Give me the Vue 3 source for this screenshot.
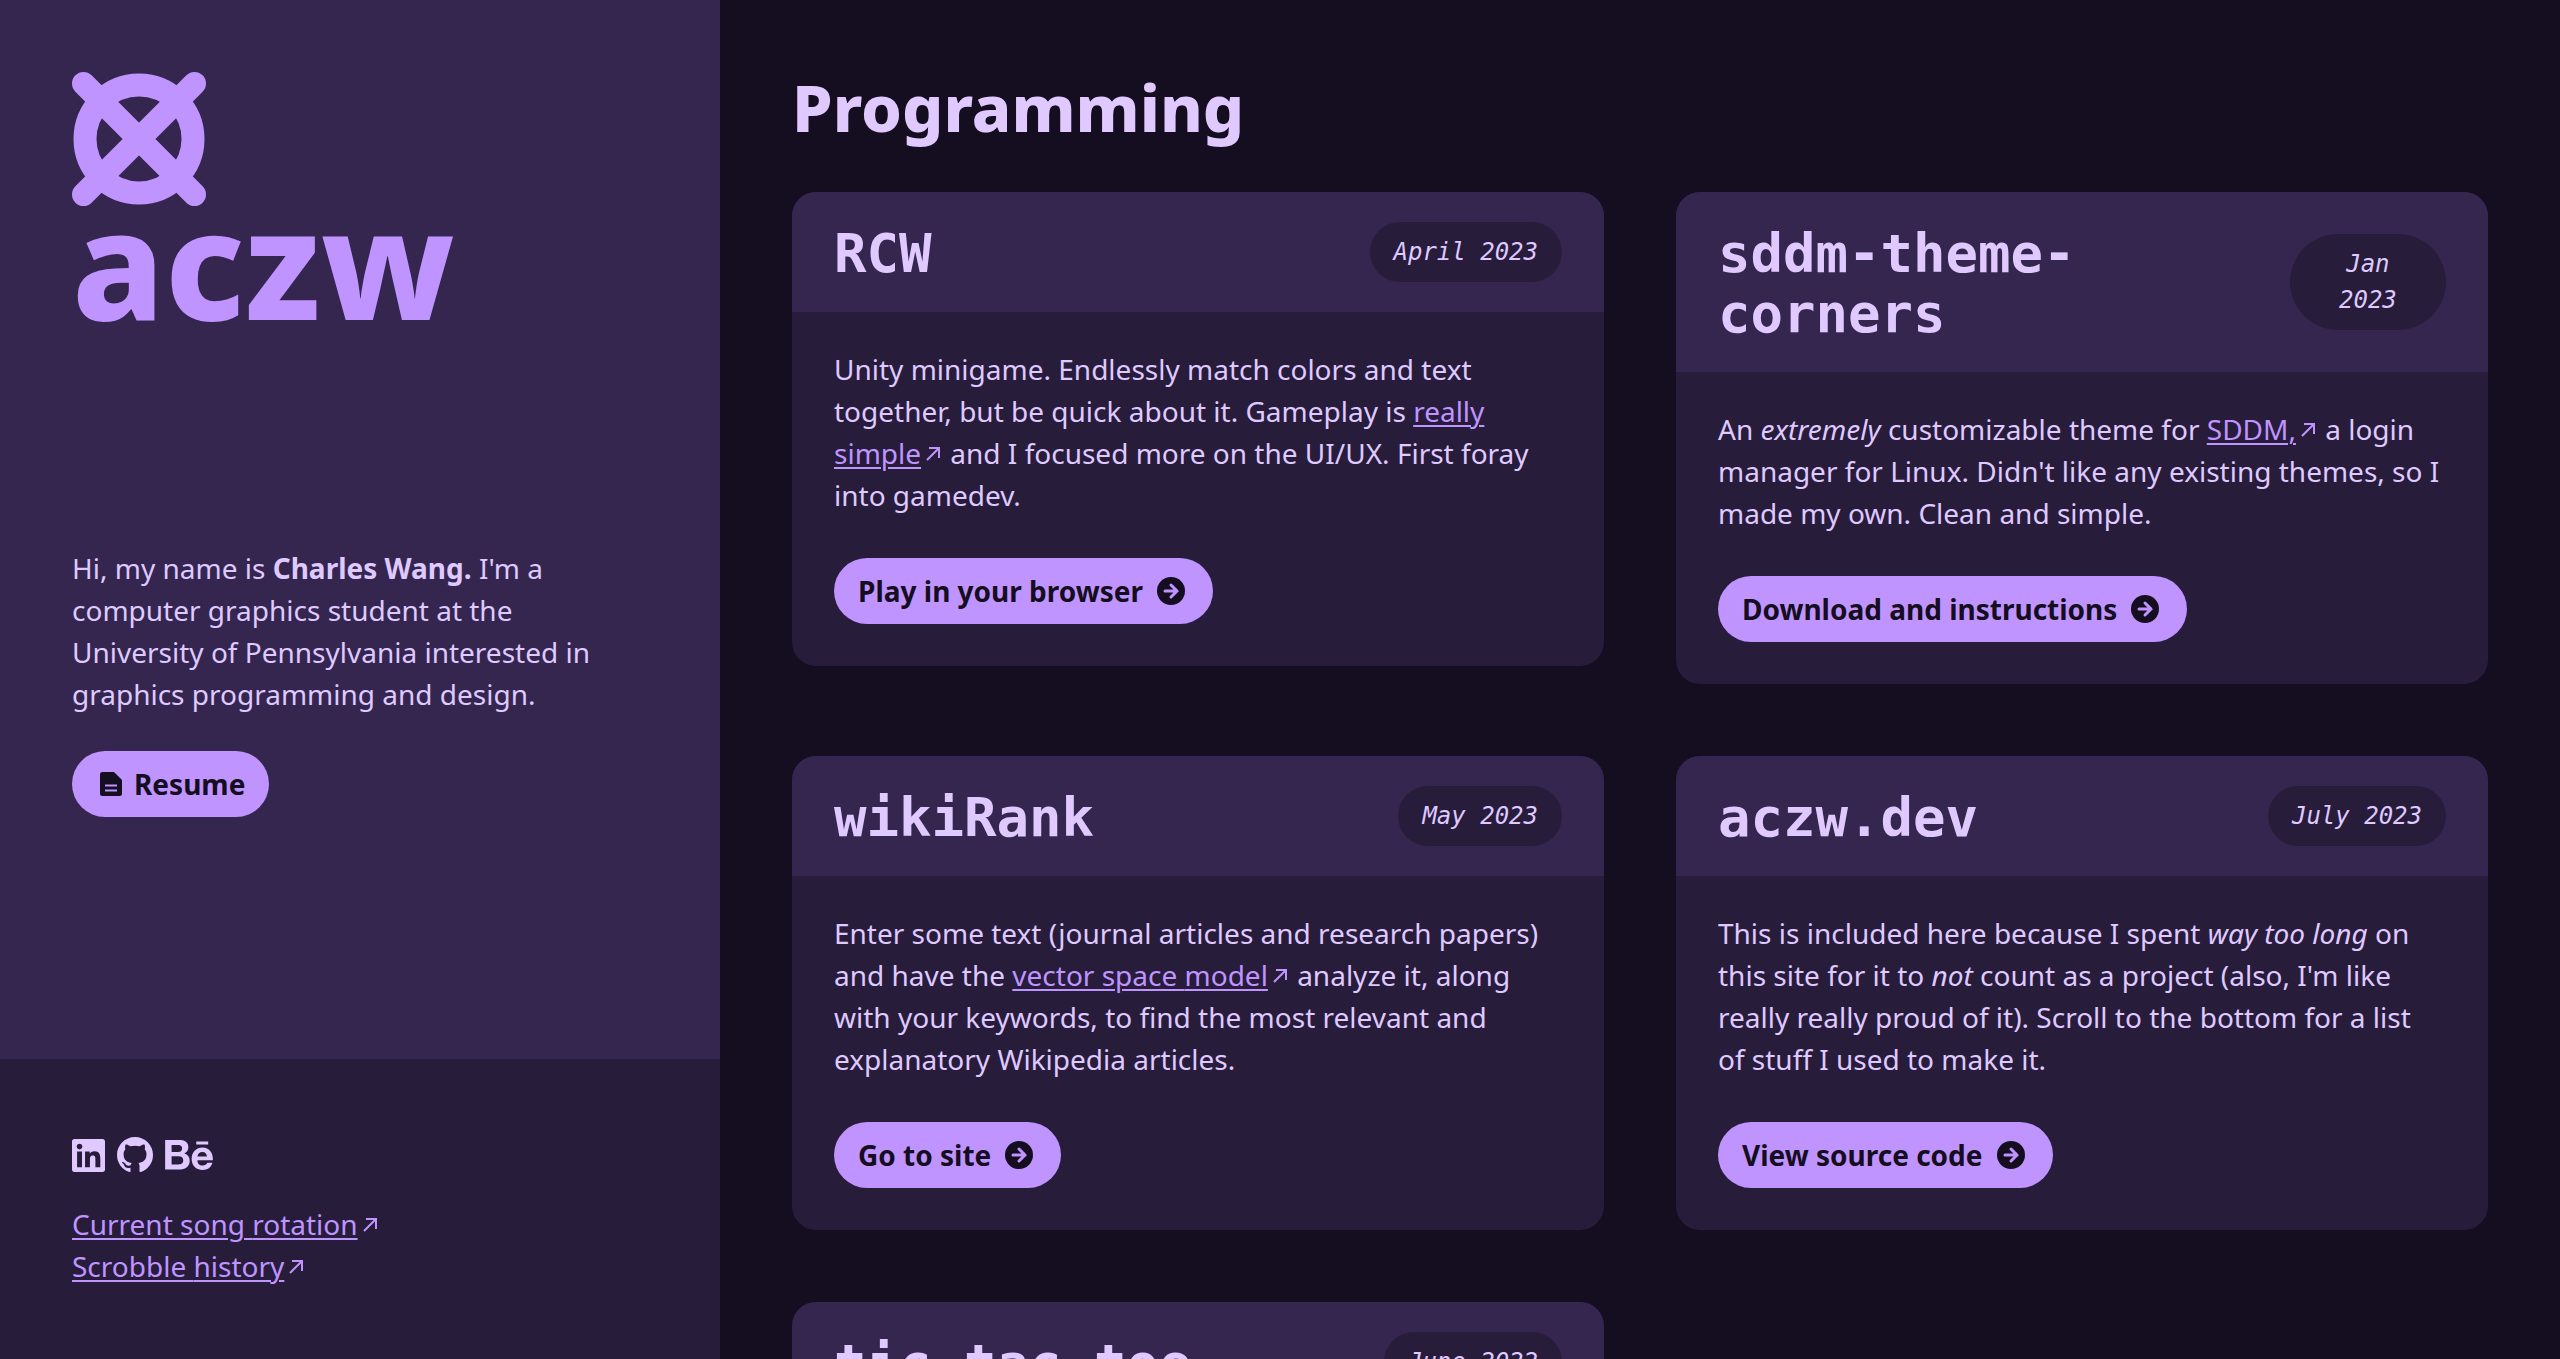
<script setup>
const projects = [
  {
    name: 'RCW',
    date: 'April 2023',
    body: [
      { t: 'Unity minigame. Endlessly match colors and text together, but be quick about it. Gameplay is ' },
      { link: 'really ', tail: 'simple' },
      { t: ' and I focused more on the UI/UX. First foray into gamedev.' },
    ],
    action: 'Play in your browser',
  },
  {
    name: 'sddm-theme-corners',
    date: 'Jan 2023',
    body: [
      { t: 'An ' },
      { em: 'extremely' },
      { t: ' customizable theme for ' },
      { link: '', tail: 'SDDM,' },
      { t: " a login manager for Linux. Didn't like any existing themes, so I made my own. Clean and simple." },
    ],
    action: 'Download and instructions',
  },
  {
    name: 'wikiRank',
    date: 'May 2023',
    body: [
      { t: 'Enter some text (journal articles and research papers) and have the ' },
      { link: 'vector space ', tail: 'model' },
      { t: ' analyze it, along with your keywords, to find the most relevant and explanatory Wikipedia articles.' },
    ],
    action: 'Go to site',
  },
  {
    name: 'aczw.dev',
    date: 'July 2023',
    body: [
      { t: 'This is included here because I spent ' },
      { em: 'way too long' },
      { t: ' on this site for it to ' },
      { em: 'not' },
      { t: " count as a project (also, I'm like really really proud of it). Scroll to the bottom for a list of stuff I used to make it." },
    ],
    action: 'View source code',
  },
  {
    name: 'tic-tac-toe',
    date: 'June 2022',
    body: [],
    action: '',
  },
]
const songLinks = [
  { link: 'Current song ', tail: 'rotation' },
  { link: 'Scrobble ', tail: 'history' },
]
</script>

<template>
  <div class="page">
    <aside class="sidebar">
      <div class="about">
        <a class="brand" href="#">
          <svg class="mark" viewBox="0 0 134 134" aria-hidden="true">
            <g fill="none" stroke="currentColor">
              <circle cx="67" cy="67" r="54" stroke-width="23" />
              <path d="M11.500 11.500 122.500 122.500M122.500 11.500 11.500 122.500" stroke-width="23" stroke-linecap="round" />
            </g>
          </svg>
          <span class="wordmark">aczw</span>
        </a>
        <div class="intro">
          <p>
            Hi, my name is <strong>Charles Wang.</strong> I'm a computer graphics student at the
            University of Pennsylvania interested in graphics programming and design.
          </p>
          <a class="button resume" href="#">
            <svg class="doc" viewBox="0 0 22 24" aria-hidden="true">
              <path fill="currentColor" fill-rule="evenodd" d="M2.500 0H14l8 8v13.500a2.500 2.500 0 0 1-2.500 2.500h-17A2.500 2.500 0 0 1 0 21.500v-19A2.500 2.500 0 0 1 2.500 0zM5 12.500v2h12v-2zM5 17.500v2h12v-2z" />
            </svg>
            Resume
          </a>
        </div>
      </div>
      <footer class="footer">
        <nav class="social">
          <a href="#" aria-label="LinkedIn">
            <svg class="linkedin" viewBox="0 32 448 448"><path fill="currentColor" d="M416 32H31.9C14.3 32 0 46.5 0 64.3v383.4C0 465.500 14.3 480 31.9 480H416c17.6 0 32-14.5 32-32.3V64.3c0-17.800-14.400-32.300-32-32.300zM135.400 416H69V202.200h66.500V416zm-33.200-243c-21.300 0-38.500-17.300-38.500-38.500S80.900 96 102.200 96c21.200 0 38.500 17.300 38.500 38.500 0 21.300-17.200 38.500-38.500 38.500zm282.100 243h-66.400V312c0-24.800-.5-56.700-34.500-56.700-34.600 0-39.900 27-39.900 54.900V416h-66.400V202.200h63.700v29.200h.9c8.900-16.800 30.600-34.500 62.900-34.500 67.200 0 79.700 44.300 79.700 101.900V416z" /></svg>
          </a>
          <a href="#" aria-label="GitHub">
            <svg class="github" viewBox="0 0 16 16"><path fill="currentColor" d="M8 0C3.58 0 0 3.58 0 8c0 3.54 2.29 6.53 5.47 7.59.4.07.55-.17.55-.38 0-.19-.01-.82-.01-1.49-2.01.37-2.53-.49-2.69-.94-.09-.23-.48-.94-.82-1.13-.28-.15-.68-.52-.01-.53.63-.01 1.08.58 1.23.82.72 1.21 1.87.87 2.33.66.07-.52.28-.87.51-1.07-1.78-.2-3.64-.89-3.64-3.95 0-.87.31-1.59.82-2.15-.08-.2-.36-1.02.08-2.12 0 0 .67-.21 2.2.82.64-.18 1.32-.27 2-.27s1.36.09 2 .27c1.53-1.04 2.2-.82 2.2-.82.44 1.1.16 1.92.08 2.12.51.56.82 1.27.82 2.15 0 3.07-1.87 3.75-3.65 3.95.29.25.54.73.54 1.48 0 1.07-.01 1.93-.01 2.2 0 .21.15.46.55.38A8.01 8.01 0 0 0 16 8c0-4.42-3.58-8-8-8z" /></svg>
          </a>
          <a href="#" aria-label="Behance">
            <svg class="behance" viewBox="0 75 576 362"><path fill="currentColor" d="M232 237.2c31.8-15.2 48.4-38.2 48.4-74 0-70.6-52.6-87.8-113.3-87.8H0v354.4h171.8c64.4 0 124.9-30.9 124.9-102.9 0-44.5-21.1-77.4-64.7-89.7zM77.9 135.9H151c28.1 0 53.4 7.9 53.4 40.5 0 30.1-19.7 42.2-47.5 42.2h-79v-82.7zm83.3 233.7H77.9V272h84.9c34.3 0 56 14.3 56 50.6 0 35.8-25.9 47-57.6 47zm358.5-240.7H376V94h143.7v34.9zM576 305.2c0-75.900-44.400-139.200-124.900-139.200-78.200 0-131.300 58.800-131.300 135.800 0 79.900 50.300 134.700 131.300 134.700 61.600 0 101-27.700 120.100-86.300H509c-6.700 21.900-34.300 33.500-55.700 33.500-41.300 0-63-24.200-63-65.300h185.100c.3-4.200.6-8.700.6-13.200zM390.400 274c2.300-33.700 24.700-54.800 58.500-54.800 35.400 0 53.200 20.800 56.200 54.800H390.400z" /></svg>
          </a>
        </nav>
        <div v-for="s in songLinks" :key="s.tail">
          <a class="link" href="#"><span>{{ s.link }}</span><span class="tail"><span>{{ s.tail }}</span><svg class="out" viewBox="0 0 14 14" aria-hidden="true"><path d="M1 13 13 1M3 1H13V11" /></svg></span></a>
        </div>
      </footer>
    </aside>

    <main class="main">
      <h1>Programming</h1>
      <div class="grid">
        <article v-for="p in projects" :key="p.name" class="card">
          <header class="card-head">
            <h2>{{ p.name }}</h2>
            <span class="date">{{ p.date }}</span>
          </header>
          <div class="card-body">
            <p>
              <template v-for="(s, i) in p.body" :key="i"><em v-if="s.em">{{ s.em }}</em><a v-else-if="s.tail" class="link" href="#"><span>{{ s.link }}</span><span class="tail"><span>{{ s.tail }}</span><svg class="out" viewBox="0 0 14 14" aria-hidden="true"><path d="M1 13 13 1M3 1H13V11" /></svg></span></a><template v-else>{{ s.t }}</template></template>
            </p>
            <a v-if="p.action" class="button" href="#">
              {{ p.action }}
              <svg class="go" viewBox="0 0 28 28" aria-hidden="true">
                <circle cx="14" cy="14" r="14" fill="currentColor" />
                <path class="go-arrow" d="M8 14H20M14 8 20 14 14 20" />
              </svg>
            </a>
          </div>
        </article>
      </div>
    </main>
  </div>
</template>

<style>
body {
  margin: 0;
  background: #150d20;
}
</style>

<style scoped>
.page {
  display: grid;
  grid-template-columns: minmax(0, 9fr) minmax(0, 23fr);
  grid-template-rows: minmax(0, 1fr);
  height: 100vh;
  overflow: hidden;
  background: #150d20;
  color: #dfc9ff;
  font: 400 28px/42px "Noto Sans", sans-serif;
}
p,
h1,
h2 {
  margin: 0;
}
.sidebar {
  display: flex;
  flex-direction: column;
  min-height: 0;
}
.about {
  flex: 1;
  padding: 72px;
  background: #352650;
}
.brand {
  display: block;
  color: #bf94ff;
  text-decoration: none;
}
.mark {
  display: block;
  width: 134px;
  height: 134px;
}
.wordmark {
  display: block;
  font-size: 152px;
  line-height: 112px;
  font-weight: 800;
}
.intro {
  margin-top: 229px;
}
.button {
  display: inline-flex;
  align-items: center;
  gap: 14px;
  height: 66px;
  padding: 0 28px 0 24px;
  border-radius: 33px;
  background: #bf94ff;
  color: #150d20;
  font-weight: 700;
  text-decoration: none;
  white-space: nowrap;
}
.intro .button {
  gap: 12px;
  margin-top: 36px;
  padding: 0 24px 0 28px;
}
.doc {
  width: 22px;
  height: 24px;
}
.go {
  width: 28px;
  height: 28px;
}
.go-arrow {
  fill: none;
  stroke: #bf94ff;
  stroke-width: 3;
  stroke-linecap: round;
}
.footer {
  padding: 72px;
  background: #281c3b;
}
.social {
  display: flex;
  align-items: center;
  gap: 12px;
  height: 48px;
  margin-bottom: 24px;
}
.social a {
  display: flex;
  color: #dfc9ff;
}
.linkedin {
  width: 33px;
  height: 33px;
}
.github {
  width: 36px;
  height: 36px;
}
.behance {
  width: 48px;
  height: 30px;
}
.link {
  color: #bf94ff;
  text-decoration: none;
}
.link span:not(.tail) {
  text-decoration: underline;
  text-decoration-thickness: 2px;
  text-underline-offset: 3px;
}
.tail {
  white-space: nowrap;
}
.out {
  width: 14px;
  height: 14px;
  margin: 0 3px 3px 5px;
  fill: none;
  stroke: currentColor;
  stroke-width: 2;
}
.main {
  padding: 72px;
}
h1 {
  font-size: 65px;
  line-height: 70px;
  font-weight: 800;
  margin-bottom: 50px;
}
.grid {
  display: grid;
  grid-template-columns: repeat(2, minmax(0, 1fr));
  gap: 72px;
  align-items: start;
}
.card {
  overflow: hidden;
  border-radius: 24px;
  background: #281c3b;
}
.card-head {
  display: flex;
  align-items: center;
  justify-content: space-between;
  gap: 24px;
  padding: 30px 42px;
  background: #352650;
}
h2 {
  margin: 2px 0 -2px;
  font: 700 54px/60px "DejaVu Sans Mono", monospace;
}
.date {
  margin: -6px 0;
  padding: 12px 24px;
  border-radius: 60px;
  background: #281c3b;
  font: italic 400 24px/36px "DejaVu Sans Mono", monospace;
  text-align: center;
}
.card-body {
  padding: 36px 46px 42px 42px;
}
.card-body .button {
  margin-top: 42px;
}
.card-body .button,
.intro .button {
  vertical-align: top;
}
</style>
